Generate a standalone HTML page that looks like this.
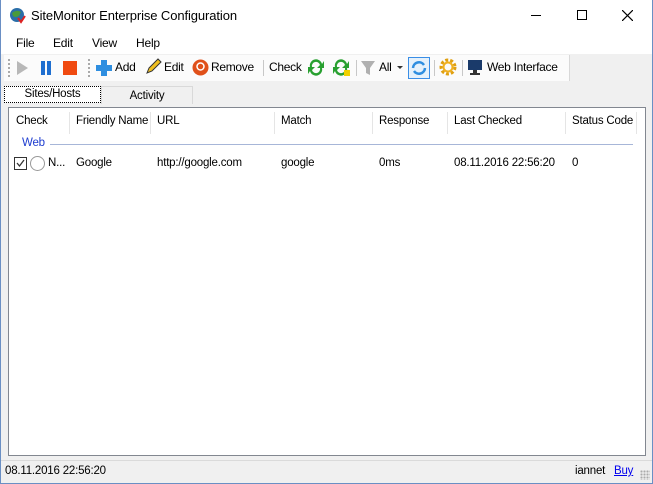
<!DOCTYPE html>
<html><head><style>
*{margin:0;padding:0;box-sizing:border-box}
body{width:653px;height:484px;overflow:hidden;background:#f0f0f0;font-family:"Liberation Sans",sans-serif;font-size:11.5px;letter-spacing:-0.2px;color:#000;position:relative}
.a{position:absolute;white-space:nowrap}
#win{position:absolute;left:0;top:0;width:653px;height:484px;border:1px solid #6a8fc4;border-top:none}
.sep{position:absolute;width:1px;background:#c8c8c8}
.hs{position:absolute;top:112px;height:22px;width:1px;background:#e5e5e5}
.t{font-size:12px;letter-spacing:-0.3px}
</style></head><body>
<div id="win"></div>
<div class="a" style="left:1px;top:0;width:651px;height:32px;background:#fff"></div>
<svg class="a" style="left:9px;top:7px" width="17" height="17"><circle cx="8" cy="8" r="7" fill="#2b6ea8"/><path d="M3 6 Q8 2 12 5 L10 9 Q6 11 4 9Z" fill="#4a9a3a"/><path d="M9 11 L12 15 L16 9" stroke="#d22" stroke-width="2" fill="none"/></svg>
<div class="a" style="left:31px;top:8px;font-size:13px;letter-spacing:-0.1px">SiteMonitor Enterprise Configuration</div>
<div class="a" style="left:531px;top:15px;width:10px;height:1px;background:#000"></div>
<div class="a" style="left:577px;top:10px;width:10px;height:10px;border:1px solid #000"></div>
<svg class="a" style="left:622px;top:10px" width="11" height="11"><path d="M0 0L11 11M11 0L0 11" stroke="#000" stroke-width="1.2"/></svg>
<div class="a" style="left:1px;top:32px;width:651px;height:22px;background:#fff"></div>
<div class="a" style="left:16px;top:36px;font-size:12px">File</div>
<div class="a" style="left:53px;top:36px;font-size:12px">Edit</div>
<div class="a" style="left:92px;top:36px;font-size:12px">View</div>
<div class="a" style="left:136px;top:36px;font-size:12px">Help</div>
<div class="a" style="left:4px;top:55px;width:566px;height:26px;background:#fbfbfb;border-right:1px solid #d8d8d8"></div>
<div class="a" style="left:8px;top:59px;width:2px;height:18px;border-left:2px dotted #aaa"></div>
<svg class="a" style="left:16px;top:60px" width="70" height="16"><path d="M1 1 L12 8 L1 15Z" fill="#b8b8b8"/><rect x="25" y="1" width="4" height="14" fill="#1f6fd0"/><rect x="31" y="1" width="4" height="14" fill="#1f6fd0"/><rect x="47" y="1" width="14" height="14" fill="#f04a10"/></svg>
<div class="a" style="left:88px;top:59px;width:2px;height:18px;border-left:2px dotted #aaa"></div>
<svg class="a" style="left:95px;top:59px" width="18" height="18"><path d="M6 1h6v5h5v6h-5v5H6v-5H1V6h5z" fill="#2e8ee0"/></svg>
<div class="a t" style="left:115px;top:60px">Add</div>
<svg class="a" style="left:144px;top:58px" width="18" height="18"><path d="M3 15 L5 10 L14 1 L17 4 L8 13Z" fill="#f0c020" stroke="#333" stroke-width="1"/></svg>
<div class="a t" style="left:164px;top:60px">Edit</div>
<svg class="a" style="left:192px;top:59px" width="17" height="17"><circle cx="8.5" cy="8.5" r="8" fill="#e0501a"/><circle cx="8.5" cy="7.5" r="3.5" fill="none" stroke="#fff" stroke-width="1.5"/></svg>
<div class="a t" style="left:211px;top:60px">Remove</div>
<div class="sep" style="left:263px;top:60px;height:16px"></div>
<div class="a t" style="left:269px;top:60px">Check</div>
<svg class="a" style="left:307px;top:58px" width="46" height="19"><path d="M3 9 A6 6 0 0 1 15 6 L17 3 L17 10 L10 10 L13 7 A4 4 0 0 0 5 9Z M15 10 A6 6 0 0 1 3 13 L1 16 L1 9 L8 9 L5 12 A4 4 0 0 0 13 10Z" fill="#28a030"/><path d="M28 9 A6 6 0 0 1 40 6 L42 3 L42 10 L35 10 L38 7 A4 4 0 0 0 30 9Z M40 10 A6 6 0 0 1 28 13 L26 16 L26 9 L33 9 L30 12 A4 4 0 0 0 38 10Z" fill="#28a030"/><rect x="37" y="12" width="6" height="6" fill="#f0d000"/></svg>
<div class="sep" style="left:356px;top:60px;height:16px"></div>
<svg class="a" style="left:360px;top:60px" width="16" height="16"><path d="M1 1h14L10 8v7l-4-2V8z" fill="#b0b0b0"/></svg>
<div class="a t" style="left:379px;top:60px">All</div>
<div class="a" style="left:397px;top:66px;border:3px solid transparent;border-top:3px solid #333"></div>
<div class="a" style="left:408px;top:57px;width:22px;height:22px;border:1px solid #3a8ee6;background:#e5f1fb"></div>
<svg class="a" style="left:411px;top:60px" width="16" height="16"><path d="M2 8 A6 6 0 0 1 13 5 M14 8 A6 6 0 0 1 3 11" stroke="#2e8ee0" stroke-width="2.5" fill="none"/></svg>
<div class="sep" style="left:434px;top:60px;height:16px"></div>
<svg class="a" style="left:439px;top:58px" width="18" height="18"><circle cx="9" cy="9" r="7" fill="none" stroke="#e0a010" stroke-width="3" stroke-dasharray="3 2"/><circle cx="9" cy="9" r="4.5" fill="none" stroke="#f0b020" stroke-width="2"/></svg>
<div class="sep" style="left:462px;top:60px;height:16px"></div>
<svg class="a" style="left:467px;top:59px" width="16" height="17"><rect x="1" y="1" width="14" height="10" fill="#1a3a6a"/><rect x="6" y="11" width="4" height="3" fill="#333"/><rect x="3" y="14" width="10" height="2" fill="#333"/></svg>
<div class="a t" style="left:487px;top:60px">Web Interface</div>
<div class="a" style="left:4px;top:86px;width:97px;height:17px;background:#fff;border:1px dotted #000;text-align:center;line-height:14px">Sites/Hosts</div>
<div class="a" style="left:101px;top:86px;width:92px;height:18px;border:1px solid #d9d9d9;border-bottom:none;text-align:center;line-height:18px">Activity</div>
<div class="a" style="left:8px;top:107px;width:638px;height:349px;background:#fff;border:1px solid #828790"></div>
<div class="a" style="left:16px;top:115px">Check</div>
<div class="hs" style="left:69px"></div>
<div class="a" style="left:76px;top:115px">Friendly Name</div>
<div class="hs" style="left:150px"></div>
<div class="a" style="left:157px;top:115px">URL</div>
<div class="hs" style="left:274px"></div>
<div class="a" style="left:281px;top:115px">Match</div>
<div class="hs" style="left:372px"></div>
<div class="a" style="left:379px;top:115px">Response</div>
<div class="hs" style="left:447px"></div>
<div class="a" style="left:454px;top:115px">Last Checked</div>
<div class="hs" style="left:565px"></div>
<div class="a" style="left:572px;top:115px">Status Code</div>
<div class="hs" style="left:636px"></div>
<div class="a" style="left:22px;top:137px;color:#1e3dd0">Web</div>
<div class="a" style="left:50px;top:144px;width:583px;height:1px;background:#a7b6d8"></div>
<div class="a" style="left:14px;top:157px;width:13px;height:13px;border:1px solid #333"></div>
<svg class="a" style="left:15px;top:158px" width="11" height="11"><path d="M2 5 L4.5 8 L9 2" stroke="#333" stroke-width="1.3" fill="none"/></svg>
<div class="a" style="left:30px;top:156px;width:15px;height:15px;border:1px solid #999;border-radius:50%"></div>
<div class="a" style="left:48px;top:157px">N...</div>
<div class="a" style="left:76px;top:157px">Google</div>
<div class="a" style="left:157px;top:157px">http://google.com</div>
<div class="a" style="left:281px;top:157px">google</div>
<div class="a" style="left:379px;top:157px">0ms</div>
<div class="a" style="left:454px;top:157px">08.11.2016 22:56:20</div>
<div class="a" style="left:572px;top:157px">0</div>
<div class="a" style="left:1px;top:460px;width:651px;height:1px;background:#dadada"></div>
<div class="a" style="left:5px;top:465px">08.11.2016 22:56:20</div>
<div class="a" style="left:575px;top:465px">iannet</div>
<div class="a" style="left:614px;top:465px;color:#0000ee;text-decoration:underline">Buy</div>
<div class="a" style="left:640px;top:470px;width:10px;height:10px;background:radial-gradient(circle,#aaa 1px,transparent 1.2px) 0 0/3px 3px"></div>
</body></html>
